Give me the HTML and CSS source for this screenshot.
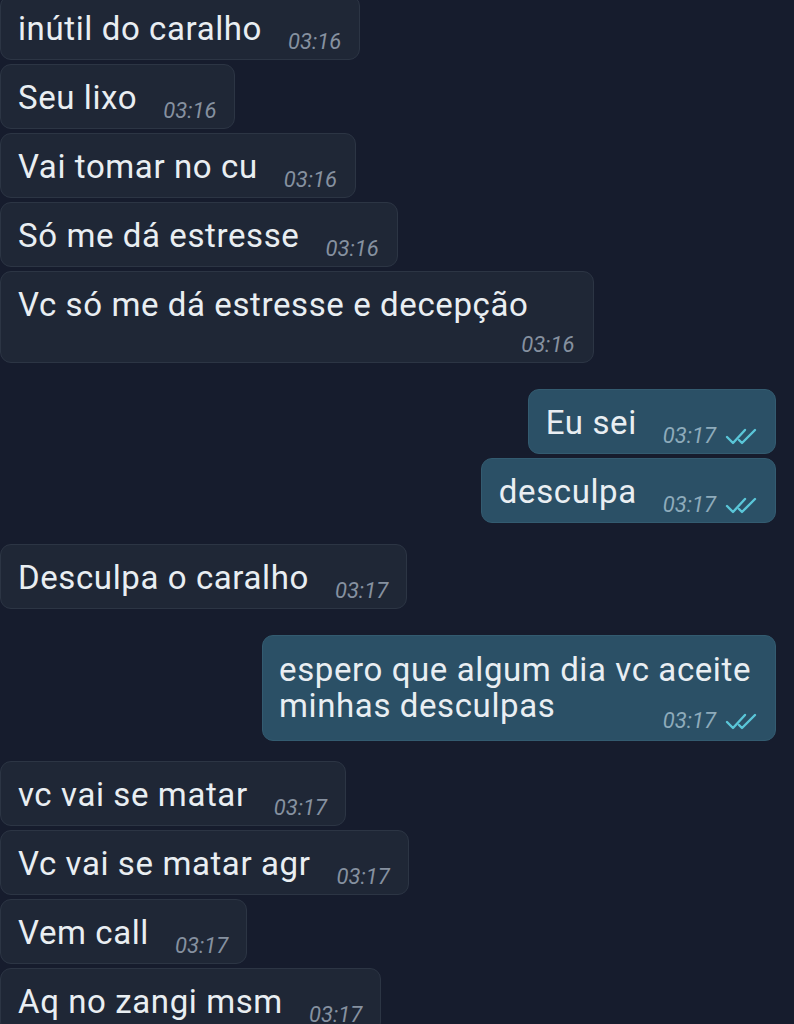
FILE: index.html
```html
<!DOCTYPE html>
<html lang="pt">

<head>
  <meta charset="UTF-8" />
  <meta name="viewport" content="width=device-width, initial-scale=1.0" />
  <title>Chat</title>
  <link rel="stylesheet" href="styles.css">
</head>

<body>

  <div class="chat">

    <div class="msg in first">
      <span class="text">inútil do caralho</span>
      <span class="meta">03:16</span>
    </div>
    <div class="msg in">
      <span class="text">Seu lixo</span>
      <span class="meta">03:16</span>
    </div>
    <div class="msg in">
      <span class="text">Vai tomar no cu</span>
      <span class="meta">03:16</span>
    </div>
    <div class="msg in">
      <span class="text">Só me dá estresse</span>
      <span class="meta">03:16</span>
    </div>
    <div class="msg in stacked">
      <span class="text">Vc só me dá estresse e decepção</span>
      <span class="meta">03:16</span>
    </div>

    <!-- sent -->
    <div class="msg out group-start wide-gap">
      <span class="text">Eu sei</span>
      <span class="meta">03:17 <svg class="ticks" viewBox="0 0 36 20"><path d="M2 11 L8 17 L20 4 M14 14 L17 17 L30 4" /></svg></span>
    </div>
    <div class="msg out">
      <span class="text">desculpa</span>
      <span class="meta">03:17 <svg class="ticks" viewBox="0 0 36 20"><path d="M2 11 L8 17 L20 4 M14 14 L17 17 L30 4" /></svg></span>
    </div>

    <div class="msg in group-start">
      <span class="text">Desculpa o caralho</span>
      <span class="meta">03:17</span>
    </div>

    <div class="msg out group-start wide-gap wrapped">
      <span class="text">espero que algum dia vc aceite<br>minhas desculpas</span>
      <span class="meta">03:17 <svg class="ticks" viewBox="0 0 36 20"><path d="M2 11 L8 17 L20 4 M14 14 L17 17 L30 4" /></svg></span>
    </div>

    <div class="msg in group-start tight-gap">
      <span class="text">vc vai se matar</span>
      <span class="meta">03:17</span>
    </div>
    <div class="msg in">
      <span class="text">Vc vai se matar agr</span>
      <span class="meta">03:17</span>
    </div>
    <div class="msg in">
      <span class="text">Vem call</span>
      <span class="meta">03:17</span>
    </div>
    <div class="msg in">
      <span class="text">Aq no zangi msm</span>
      <span class="meta">03:17</span>
    </div>

  </div>

</body>

</html>
```

FILE: styles.css
```css
* {
  margin: 0;
  padding: 0;
  box-sizing: border-box;
}

body {
  font-family: Roboto, 'Liberation Sans', sans-serif;
  background: #161c2d;
  height: 1024px;
  overflow: hidden;
}

.chat {
  display: flex;
  flex-direction: column;
  gap: 4px;
  padding: 0 18px 0 0;
  margin-top: -5px;
}

.msg {
  display: flex;
  align-items: flex-end;
  padding: 0 18px 6px 17px;
  border-radius: 11px;
  color: #e9eef2;
}

.msg.in {
  align-self: flex-start;
  background: #1f2736;
  border: 1px solid #2c3544;
}

.msg.out {
  align-self: flex-end;
  background: #2b5066;
  border: 1px solid #335b70;
  padding-right: 14px;
}

.msg.group-start {
  margin-top: 17px;
}

.msg.wide-gap {
  margin-top: 22px;
}

.msg.tight-gap {
  margin-top: 16px;
}

.text {
  font-size: 33px;
  line-height: 40px;
  letter-spacing: 0.6px;
  padding-top: 13px;
  margin-bottom: 4px;
  white-space: nowrap;
}

.meta {
  display: flex;
  align-items: center;
  gap: 9px;
  font-size: 22px;
  line-height: 22px;
  font-style: italic;
  color: #8691a0;
  margin-left: 26px;
  white-space: nowrap;
}

.out .meta {
  color: #8eabbb;
}

.ticks {
  width: 36px;
  height: 20px;
  fill: none;
  stroke: #5ac6d8;
  stroke-width: 2.4;
  stroke-linecap: round;
  stroke-linejoin: round;
}

/* time on its own line under the text */
.msg.stacked {
  flex-direction: column;
  align-items: stretch;
  padding-right: 19px;
}

.msg.stacked .text {
  margin-bottom: 9px;
  margin-right: 46px;
}

.msg.stacked .meta {
  justify-content: flex-end;
  margin-left: 0;
}

/* two lines, time sits next to the last one */
.msg.wrapped {
  flex-direction: column;
  align-items: stretch;
  padding: 0 24px 8px 16px;
}

.msg.wrapped .text {
  line-height: 36px;
  padding-top: 16px;
  margin-bottom: 0;
}

.msg.wrapped .meta {
  justify-content: flex-end;
  margin: -14px -10px 0 0;
}
```
